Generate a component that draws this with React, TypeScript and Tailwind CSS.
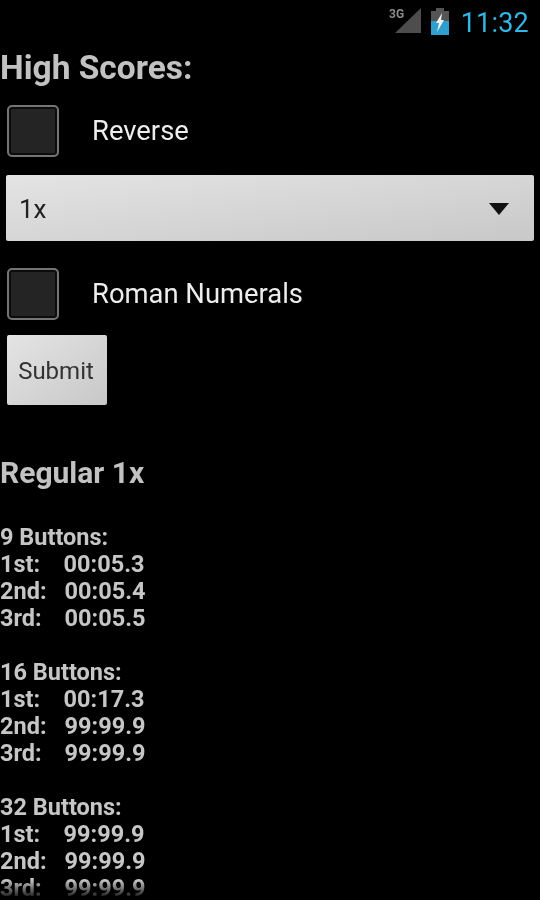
const rf = "font-['Roboto',sans-serif]";

function Check({ label }: { label: string }) {
  return (
    <div className="flex items-center h-[52px] pl-[7px]">
      <div className="w-[52px] h-[52px] rounded-[5px] border-[2px] border-[#747474] bg-[#242424] shadow-[inset_0_0_0_2px_#0c0c0c]" />
      <span className="ml-[33px] mt-[2px] text-[27.4px] leading-none text-[#ededed]">{label}</span>
    </div>
  );
}

function Block({ title, rows }: { title: string; rows: [string, string, string][] }) {
  return (
    <div className="mb-[27px] text-[23.5px] leading-[27px] font-bold text-[#c6c6c6]">
      <div>{title}</div>
      {rows.map(([p, t, ml]) => (
        <div key={p} className="flex">
          <span className="w-[63.6px]">{p}</span>
          <span className={ml}>{t}</span>
        </div>
      ))}
    </div>
  );
}

export default function App() {
  return (
    <div className={`relative w-[540px] h-[900px] overflow-hidden bg-black blur-[0.5px] ${rf}`}>
      <div className="flex items-center justify-end h-[46px] pr-[11px]">
        <svg width="34" height="29" viewBox="0 0 34 29" className="mr-[8px] mt-[-7px]">
          <polygon points="6,28 32,3 32,28" fill="#4d4d4d" />
          <text x="0" y="13" fontSize="12" fontWeight="700" fill="#8a8a8a" fontFamily="Roboto, sans-serif">3G</text>
        </svg>
        <svg width="18" height="27" viewBox="0 0 18 27" className="mr-[12px] mt-[-3px]">
          <rect x="5" y="0" width="8" height="3" fill="#555" />
          <rect x="0" y="3" width="18" height="24" fill="#555" />
          <rect x="0" y="13" width="18" height="14" fill="#2f9fd0" />
          <polygon points="11,5 5,15 8,15 6,24 13,12 10,12" fill="#f2f2f2" />
        </svg>
        <span className="text-[27px] leading-none tracking-[0.2px] text-[#33b5e5]">11:32</span>
      </div>
      <div className="text-[33.5px] leading-[44px] font-bold text-[#c2c2c2]">High Scores:</div>
      <div className="mt-[15px]">
        <Check label="Reverse" />
      </div>
      <div className="mt-[18px] mx-[6px] h-[66px] rounded-[2px] bg-gradient-to-br from-[#e4e4e4] to-[#c8c8c8] flex items-center justify-between pl-[13px] pr-[25px]">
        <span className="text-[26px] leading-none text-[#222] mt-[2px]">1x</span>
        <svg width="20" height="12" viewBox="0 0 20 12" className="mt-[2px]">
          <polygon points="0,0 20,0 10,12" fill="#111" />
        </svg>
      </div>
      <div className="mt-[27px]">
        <Check label="Roman Numerals" />
      </div>
      <button className="block mt-[15px] ml-[7px] w-[100px] h-[70px] rounded-[2px] bg-gradient-to-br from-[#e4e4e4] to-[#c8c8c8] text-[24px] text-[#333] pt-[2px] pr-[2px]">
        Submit
      </button>
      <div className="mt-[48px] text-[30px] leading-[40px] font-bold text-[#c2c2c2]">Regular 1x</div>
      <div className="mt-[31px]">
        <Block
          title="9 Buttons:"
          rows={[
            ["1st:", "00:05.3", "ml-0"],
            ["2nd:", "00:05.4", "ml-px"],
            ["3rd:", "00:05.5", "ml-px"],
          ]}
        />
        <Block
          title="16 Buttons:"
          rows={[
            ["1st:", "00:17.3", "ml-0"],
            ["2nd:", "99:99.9", "ml-px"],
            ["3rd:", "99:99.9", "ml-px"],
          ]}
        />
        <Block
          title="32 Buttons:"
          rows={[
            ["1st:", "99:99.9", "ml-0"],
            ["2nd:", "99:99.9", "ml-px"],
            ["3rd:", "99:99.9", "ml-px"],
          ]}
        />
      </div>
      <div className="absolute left-0 right-0 bottom-0 h-[20px] bg-gradient-to-b from-transparent to-black" />
    </div>
  );
}
